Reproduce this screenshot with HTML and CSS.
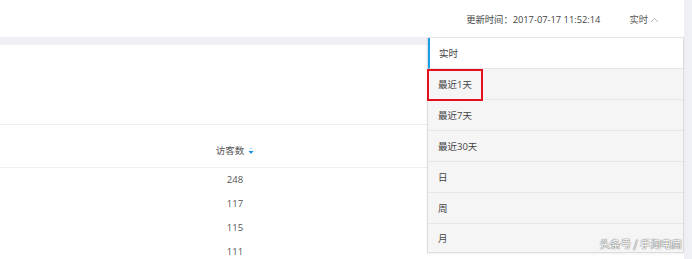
FILE: index.html
```html
<!DOCTYPE html>
<html lang="zh">
<head>
<meta charset="utf-8">
<link rel="stylesheet" href="styles.css">
</head>
<body>
<div class="page">
  <div class="main">
    <header class="header">
      <span class="update">更新时间：2017-07-17 11:52:14</span>
      <span class="range">实时<svg class="chev" width="9" height="6" viewBox="0 0 9 6"><path d="M1 5 L4.5 1.5 L8 5" fill="none" stroke="#b5b5b5" stroke-width="1"/></svg></span>
    </header>
    <section class="panel">
      <div class="top-area"></div>
      <div class="thead">
        <div class="cell">访客数<svg class="sort" width="6" height="9" viewBox="0 0 6 9"><path d="M0.5 3.5 L3 1 L5.5 3.5 Z" fill="#cfe6f6"/><path d="M0.5 5 L3 8 L5.5 5 Z" fill="#1a8fe0"/></svg></div>
      </div>
      <div class="row"><div class="cell">248</div></div>
      <div class="row"><div class="cell">117</div></div>
      <div class="row"><div class="cell">115</div></div>
      <div class="row"><div class="cell">111</div></div>
    </section>
  </div>
  <ul class="dropdown">
    <li class="item active">实时</li>
    <li class="item">最近1天</li>
    <li class="item">最近7天</li>
    <li class="item">最近30天</li>
    <li class="item">日</li>
    <li class="item">周</li>
    <li class="item">月</li>
  </ul>
  <div class="mark"></div>
  <div class="watermark">头条号 / 手淘电商</div>
</div>
</body>
</html>
```
FILE: styles.css
```css
* { box-sizing: border-box; }
html, body { margin: 0; padding: 0; }
body {
  font-family: "Open Sans", "Noto Sans CJK SC", sans-serif;
  color: #555;
  font-size: 9.5px;
}
.page {
  position: relative;
  width: 692px;
  height: 259px;
  background: #eef0f6;
  overflow: hidden;
  display: flex;
}
.main {
  width: 684px;
  height: 259px;
  display: flex;
  flex-direction: column;
  gap: 8px;
}
.header {
  flex-shrink: 0;
  height: 37px;
  background: #fff;
  display: flex;
  align-items: center;
  justify-content: flex-end;
  padding: 1px 25px 0 0;
  color: #444;
  font-size: 9.3px;
}
.update { margin-right: 29px; }
.range { display: flex; align-items: center; color: #555; }
.chev { margin-left: 2px; margin-top: 1px; }
.panel {
  flex: 1;
  min-height: 0;
  overflow: hidden;
  background: #fff;
}
.top-area {
  height: 80px;
  border-bottom: 1px solid #eeeeee;
}
.thead {
  height: 43px;
  border-bottom: 1px solid #eeeeee;
  display: flex;
  align-items: center;
  padding-top: 8px;
}
.row {
  height: 24px;
  display: flex;
  align-items: center;
  padding-bottom: 2px;
}
.cell {
  margin-left: 175px;
  width: 120px;
  display: flex;
  justify-content: center;
  align-items: center;
  color: #555;
}
.sort { margin-left: 4px; }
.dropdown {
  position: absolute;
  left: 427px;
  top: 37px;
  width: 257px;
  margin: 0;
  padding: 0;
  list-style: none;
  border: 1px solid #dcdcdc;
  border-top: 1px solid #e4e4e4;
  background: #f5f5f5;
  box-shadow: 0 1px 2px rgba(0,0,0,0.06);
}
.item {
  height: 31px;
  padding-left: 10px;
  display: flex;
  align-items: center;
  border-bottom: 1px solid #e6e6e6;
  color: #444;
  font-size: 9.5px;
}
.item:last-child { border-bottom: none; height: 28px; }
.item.active {
  background: #fff;
  border-left: 2px solid #1a9ee6;
  padding-left: 9px;
}
.mark {
  position: absolute;
  left: 427px;
  top: 69px;
  width: 56px;
  height: 32px;
  border: 2px solid #e3101c;
}
.watermark {
  position: absolute;
  right: 10px;
  bottom: 8px;
  font-family: "Noto Sans CJK SC", sans-serif;
  font-size: 10.5px;
  color: #fff;
  text-shadow: 0 0 1px #777, 0 0 1px #777, 0 0 1px #777;
}
```
